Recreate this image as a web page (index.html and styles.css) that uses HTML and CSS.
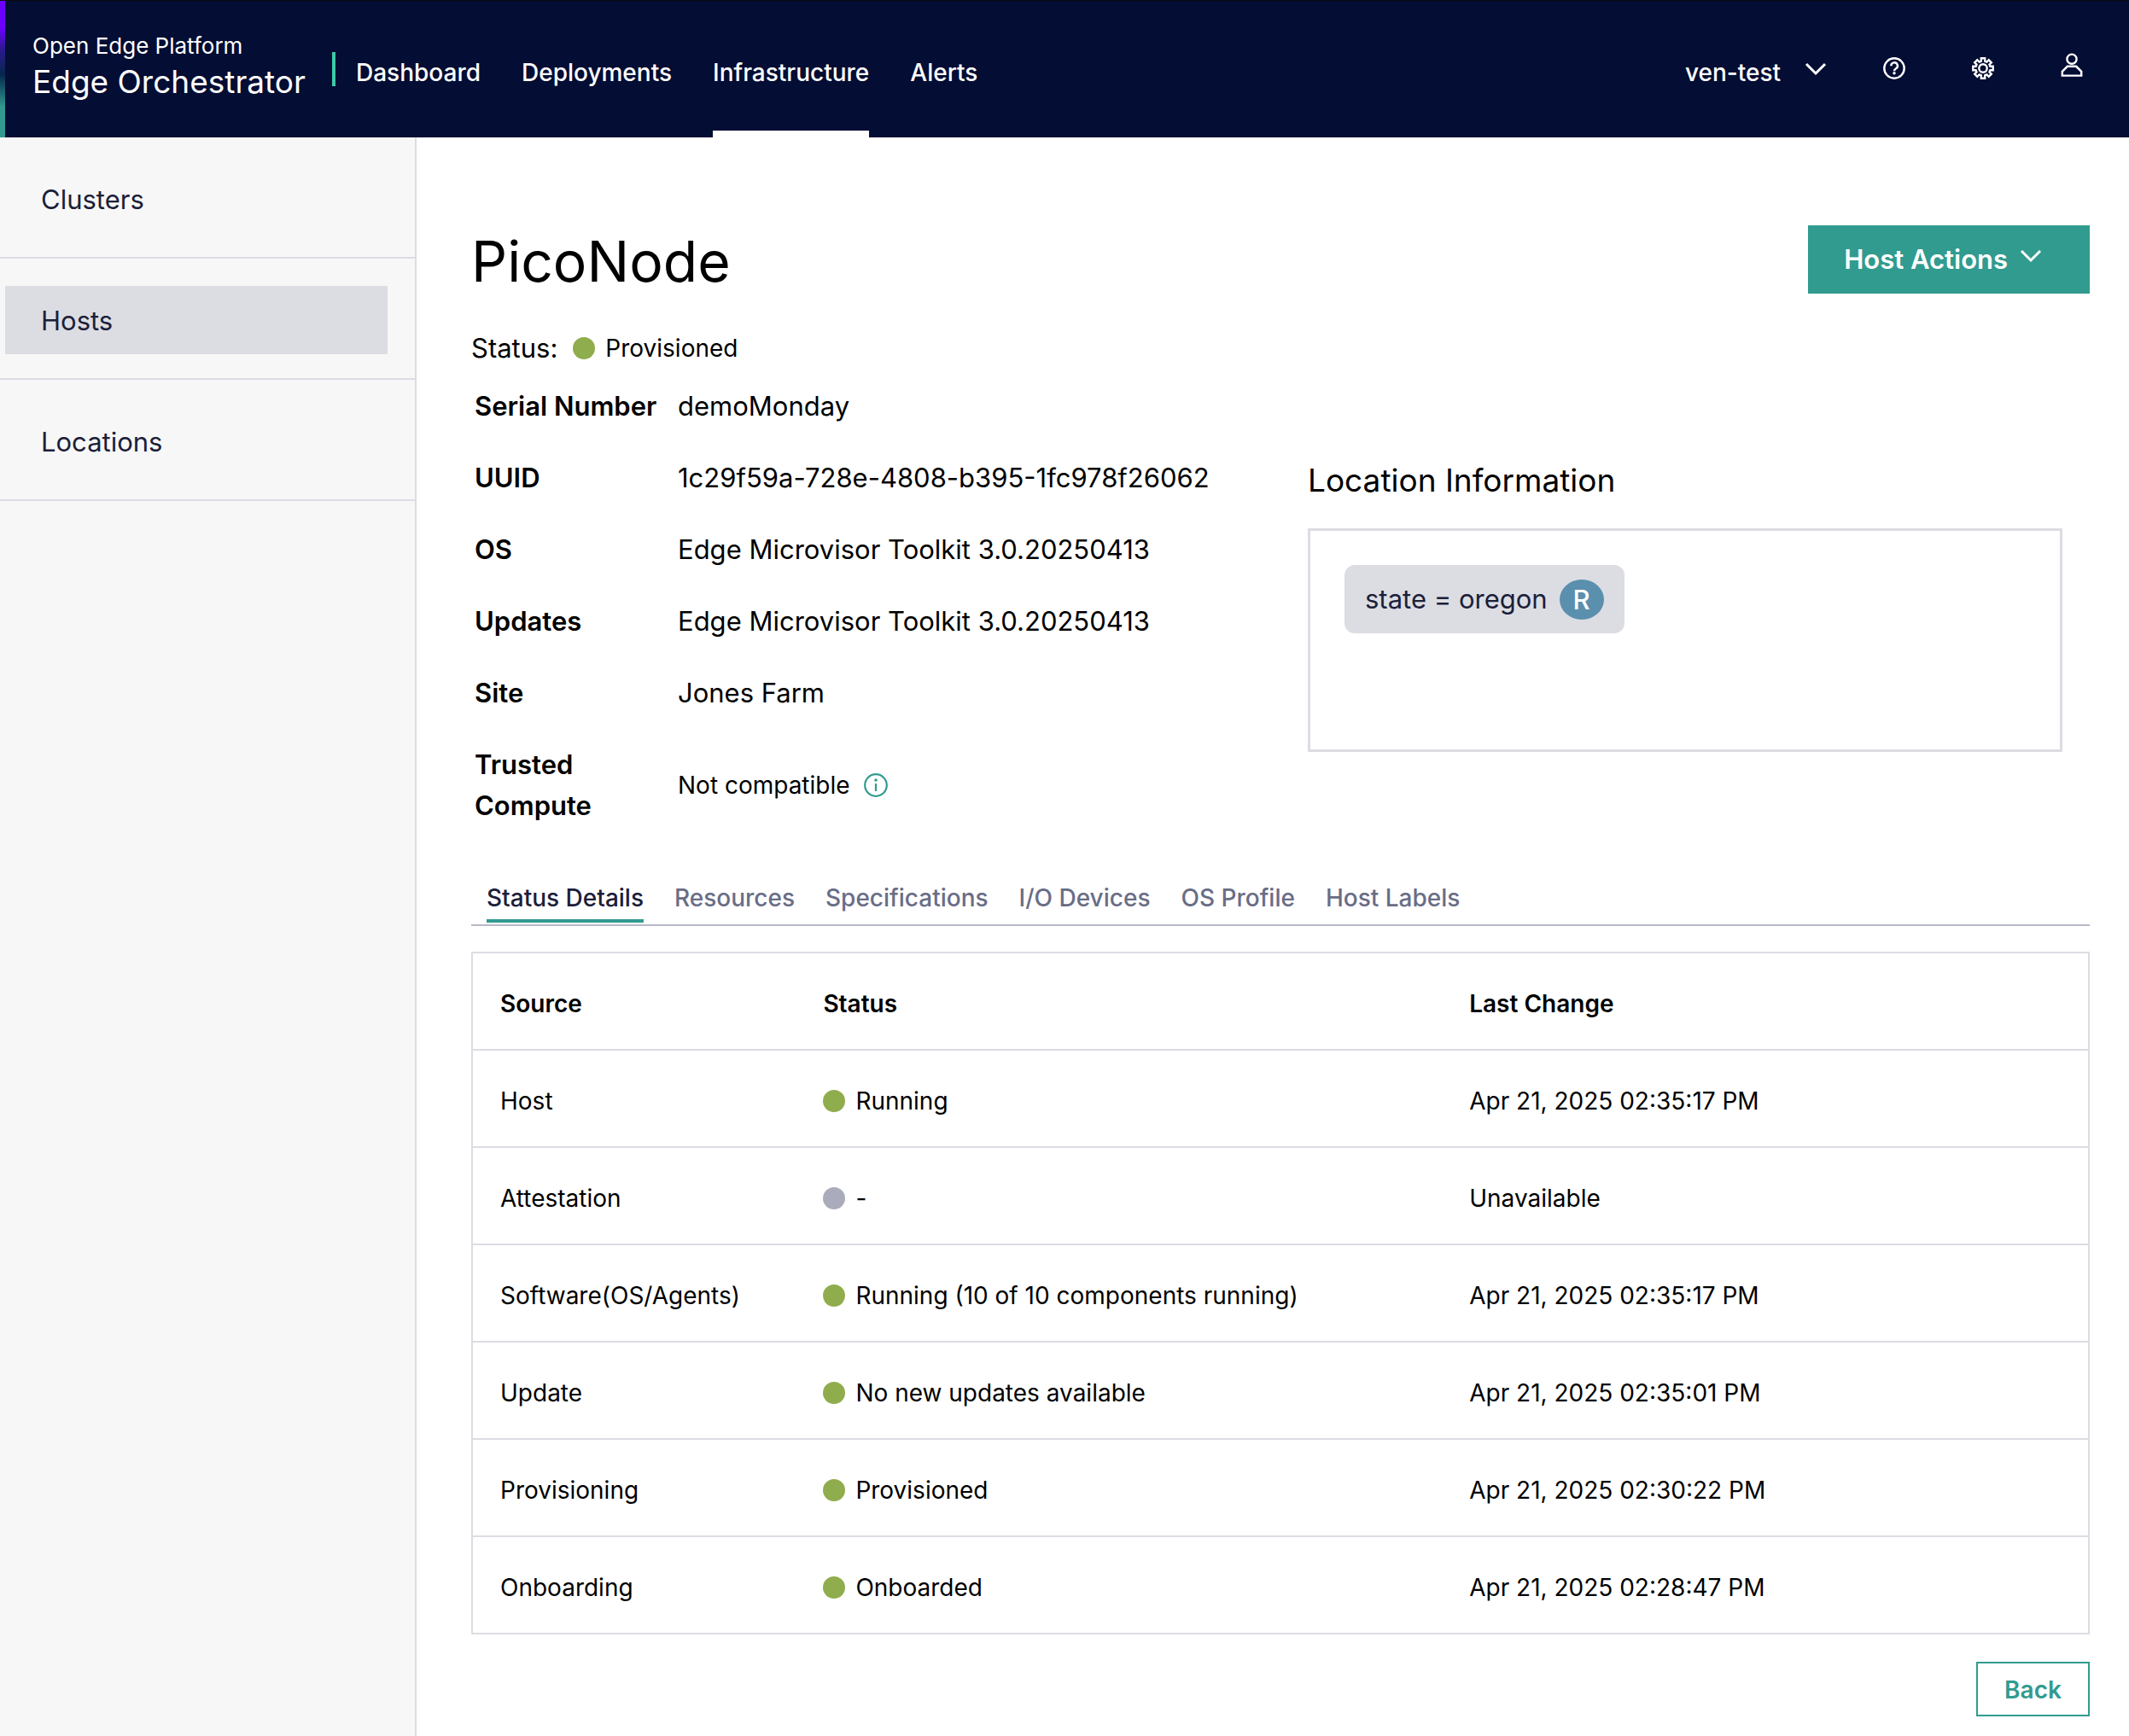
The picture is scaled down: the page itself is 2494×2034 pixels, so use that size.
FILE: index.html
```html
<!DOCTYPE html>
<html lang="en">
<head>
<meta charset="utf-8">
<meta name="viewport" content="width=device-width, initial-scale=1">
<title>PicoNode – Edge Orchestrator</title>
<link rel="stylesheet" href="styles.css">
</head>
<body>
<header class="topbar">
  <div class="brand">
    <span class="brand-platform">Open Edge Platform</span>
    <span class="brand-product">Edge Orchestrator</span>
  </div>
  <nav class="main-nav" aria-label="Main">
    <a class="nav-link" href="#">Dashboard</a>
    <a class="nav-link" href="#">Deployments</a>
    <a class="nav-link active" href="#" aria-current="page">Infrastructure</a>
    <a class="nav-link" href="#">Alerts</a>
  </nav>
  <div class="tools">
    <button class="project-switch" type="button">
      <span class="project-name">ven-test</span>
      <svg class="chevron" viewBox="0 0 26 16" aria-hidden="true"><path d="M2 2l11 11L24 2"/></svg>
    </button>
    <button class="icon-button" type="button" aria-label="Help">
      <svg class="icon" viewBox="0 0 26 26" aria-hidden="true"><circle cx="13" cy="13" r="11.7"/><path d="M9.3 10.2a3.8 3.8 0 1 1 5.800 3.100c-1.400.800-2.100 1.400-2.100 2.900"/><circle class="solid" cx="13" cy="18.700" r="1.700"/></svg>
    </button>
    <button class="icon-button" type="button" aria-label="Settings">
      <svg class="icon" viewBox="0 0 26 26" aria-hidden="true"><path d="M10.8 4.6V1.300h4.400v3.300L17.400 5.500l2.300-2.300 3.100 3.100-2.300 2.300.9 2.200h3.300v4.400h-3.300l-.9 2.200 2.300 2.300-3.100 3.100-2.300-2.300-2.200.9v3.300h-4.400v-3.300l-2.200-.9-2.300 2.300-3.100-3.100 2.300-2.300-.9-2.200H1.300v-4.400h3.300l.9-2.200-2.300-2.300 3.100-3.100 2.300 2.300z"/><circle cx="13" cy="13" r="4.700"/></svg>
    </button>
    <button class="icon-button account" type="button" aria-label="Account">
      <svg class="icon icon-tall" viewBox="0 0 26 28" aria-hidden="true"><circle cx="13" cy="7.200" r="5.600"/><path d="M1.800 26.600v-4.800l6-6h10.400l6 6v4.800z"/></svg>
    </button>
  </div>
</header>
<div class="layout">
  <nav class="sidebar" aria-label="Infrastructure">
    <ul class="side-list">
      <li class="side-item"><a class="side-link" href="#">Clusters</a></li>
      <li class="side-item"><a class="side-link active" href="#" aria-current="page">Hosts</a></li>
      <li class="side-item"><a class="side-link" href="#">Locations</a></li>
    </ul>
  </nav>
  <main class="content">
    <div class="title-row">
      <h1 class="title">PicoNode</h1>
      <button class="primary-button" type="button">Host Actions
        <svg class="chevron" viewBox="0 0 26 16" aria-hidden="true"><path d="M2 2l11 11L24 2"/></svg>
      </button>
    </div>
    <div class="host-status">
      <span class="host-status-label">Status:</span>
      <span class="status"><span class="dot ok"></span>Provisioned</span>
    </div>
    <div class="summary">
      <table class="facts">
        <tbody>
          <tr><th scope="row">Serial Number</th><td>demoMonday</td></tr>
          <tr><th scope="row">UUID</th><td>1c29f59a-728e-4808-b395-1fc978f26062</td></tr>
          <tr><th scope="row">OS</th><td>Edge Microvisor Toolkit 3.0.20250413</td></tr>
          <tr><th scope="row">Updates</th><td>Edge Microvisor Toolkit 3.0.20250413</td></tr>
          <tr><th scope="row">Site</th><td>Jones Farm</td></tr>
          <tr><th scope="row">Trusted Compute</th><td><span class="compat">Not compatible
            <svg class="info" viewBox="0 0 28 28" role="img" aria-label="More information"><circle cx="14" cy="14" r="12.800"/><path d="M14 12v9"/><circle class="solid" cx="14" cy="8" r="1.800"/></svg></span></td></tr>
        </tbody>
      </table>
      <section class="location">
        <h2 class="location-title">Location Information</h2>
        <div class="location-box">
          <span class="chip">state = oregon <span class="chip-badge">R</span></span>
        </div>
      </section>
    </div>
    <nav class="tabs" aria-label="Host details">
      <a class="tab active" href="#" aria-current="true">Status Details</a>
      <a class="tab" href="#">Resources</a>
      <a class="tab" href="#">Specifications</a>
      <a class="tab" href="#">I/O Devices</a>
      <a class="tab" href="#">OS Profile</a>
      <a class="tab" href="#">Host Labels</a>
    </nav>
    <table class="status-table">
      <thead>
        <tr><th class="col-source" scope="col">Source</th><th class="col-status" scope="col">Status</th><th class="col-change" scope="col">Last Change</th></tr>
      </thead>
      <tbody>
        <tr><td>Host</td><td><span class="status"><span class="dot ok"></span>Running</span></td><td>Apr 21, 2025 02:35:17 PM</td></tr>
        <tr><td>Attestation</td><td><span class="status"><span class="dot"></span>-</span></td><td>Unavailable</td></tr>
        <tr><td>Software(OS/Agents)</td><td><span class="status"><span class="dot ok"></span>Running (10 of 10 components running)</span></td><td>Apr 21, 2025 02:35:17 PM</td></tr>
        <tr><td>Update</td><td><span class="status"><span class="dot ok"></span>No new updates available</span></td><td>Apr 21, 2025 02:35:01 PM</td></tr>
        <tr><td>Provisioning</td><td><span class="status"><span class="dot ok"></span>Provisioned</span></td><td>Apr 21, 2025 02:30:22 PM</td></tr>
        <tr><td>Onboarding</td><td><span class="status"><span class="dot ok"></span>Onboarded</span></td><td>Apr 21, 2025 02:28:47 PM</td></tr>
      </tbody>
    </table>
    <div class="footer-actions">
      <button class="outline-button" type="button">Back</button>
    </div>
  </main>
</div>
</body>
</html>
```
FILE: styles.css
```css
:root {
  --navy: #040d33;
  --teal: #319b8f;
  --line: #dcdde3;
  --ink: #1b2039;
}

* { box-sizing: border-box; }

body {
  display: flex;
  flex-direction: column;
  min-height: 100vh;
  margin: 0;
  font: 400 28px/40px Inter, "Liberation Sans", sans-serif;
  color: #000;
  background: #fff;
}

a { color: inherit; text-decoration: none; }
button { font: inherit; color: inherit; background: none; border: 0; padding: 0; }
svg { display: block; flex: none; fill: none; stroke: currentColor; }
svg .solid { fill: currentColor; stroke: none; }

/* Top bar */
.topbar {
  display: flex;
  align-items: center;
  height: 161px;
  padding-right: 54px;
  border-top: 1px solid #0c0c0c;
  color: #fff;
  background:
    linear-gradient(#6c00ff 20%, #2a1a8c 36%, #06264d 54%, #319b8f 78%) left / 6px 100% no-repeat,
    var(--navy);
}
.brand {
  display: flex;
  flex-direction: column;
  align-self: flex-start;
  padding: 35px 31px 0 38px;
}
.brand-platform { font-size: 26px; line-height: 36px; }
.brand-product { font-size: 37px; line-height: 48px; }
.main-nav {
  display: flex;
  align-self: stretch;
  gap: 48px;
  align-items: stretch;
}
.main-nav::before {
  content: "";
  align-self: center;
  width: 4px;
  height: 40px;
  margin-right: -24px;
  background: #3fc9a9;
}
.nav-link {
  display: flex;
  align-items: center;
  padding-top: 16px;
  font-weight: 500;
  border-bottom: 8px solid transparent;
}
.nav-link.active { border-bottom-color: #fff; }
.tools {
  display: flex;
  align-items: center;
  gap: 78px;
  margin-left: auto;
}
.project-switch {
  display: flex;
  align-items: center;
  gap: 28px;
  margin-right: -12px;
  font-weight: 500;
}
.project-name { padding-top: 8px; }
.chevron { width: 26px; height: 16px; stroke-width: 3; }
.icon { width: 26px; height: 26px; stroke-width: 2.4; }
.icon-tall { height: 28px; }
.icon-button { padding-bottom: 2px; }
.account { padding-bottom: 10px; }

/* Page frame */
.layout { display: flex; flex: 1; }
.sidebar {
  flex: none;
  width: 488px;
  color: var(--ink);
  background: #f7f7f7;
  border-right: 2px solid var(--line);
}
.side-list { margin: 0; padding: 0; list-style: none; }
.side-item { padding: 32px 32px 28px 6px; border-bottom: 2px solid var(--line); }
.side-link { display: block; padding: 2px 42px 0; font-size: 31px; line-height: 78px; }
.side-link.active { background: var(--line); }
.content { flex: 1; min-width: 0; padding: 103px 46px 23px 64px; }

/* Title and status */
.title-row { display: flex; justify-content: space-between; align-items: flex-start; }
.title { margin: 0; font-size: 66px; font-weight: 400; line-height: 84px; }
.primary-button {
  display: flex;
  align-items: center;
  gap: 14px;
  height: 80px;
  padding: 0 56px 0 42px;
  font-size: 31px;
  font-weight: 600;
  color: #fff;
  background: var(--teal);
}
.primary-button .chevron { margin-bottom: 8px; }
.host-status { display: flex; align-items: center; gap: 18px; margin-top: 36px; line-height: 48px; }
.host-status-label { font-size: 31px; }
.status { display: inline-flex; align-items: center; gap: 12px; }
.dot { flex: none; width: 26px; height: 26px; border-radius: 50%; background: #aaacbb; }
.dot.ok { background: #8fad4c; }

/* Host facts and location */
.summary {
  display: grid;
  grid-template-columns: 1fr 1fr;
  align-items: center;
  margin-top: 1px;
}
.facts { border-spacing: 2px; font-size: 31px; line-height: 48px; text-align: left; }
.facts th { width: 238px; padding: 17px 20px 17px 2px; font-weight: 600; }
.facts td { padding: 17px 0; white-space: nowrap; }
.compat { display: flex; align-items: center; gap: 16px; font-size: 28px; }
.info { width: 28px; height: 28px; color: var(--teal); stroke-width: 2.2; }
.location { padding: 0 32px 4px; }
.location-title { margin: 0 0 28px; font-size: 37px; font-weight: 400; line-height: 56px; }
.location-box { min-height: 262px; padding: 40px; border: 3px solid var(--line); }
.chip {
  display: inline-flex;
  align-items: center;
  gap: 14px;
  height: 80px;
  padding: 0 24px;
  font-size: 31px;
  color: var(--ink);
  background: var(--line);
  border-radius: 12px;
}
.chip-badge {
  width: 52px;
  height: 47px;
  font-weight: 500;
  line-height: 47px;
  text-align: center;
  color: #fff;
  background: #5b8fae;
  border-radius: 50%;
}

/* Tabs */
.tabs {
  display: flex;
  gap: 36px;
  margin-top: 45px;
  padding: 0 18px 2px;
  font-weight: 500;
  color: #696d86;
  border-bottom: 2px solid #b6bac6;
}
.tab { padding-bottom: 5px; border-bottom: 4px solid transparent; }
.tab.active { color: var(--ink); border-bottom-color: var(--teal); }

/* Status table */
.status-table {
  width: 100%;
  margin-top: 30px;
  table-layout: fixed;
  border: 2px solid var(--line);
  border-spacing: 0;
  text-align: left;
}
.status-table th, .status-table td { padding: 39px 32px 33px; }
.status-table th { font-weight: 600; }
.status-table td { border-top: 2px solid var(--line); }
.status-table .status { display: flex; }
.col-source { width: 20%; }
.col-status { width: 40%; }
.col-change { width: 40%; }

.footer-actions { display: flex; justify-content: flex-end; margin-top: 32px; }
.outline-button {
  width: 133px;
  height: 64px;
  padding-top: 2px;
  font-weight: 600;
  color: var(--teal);
  border: 2px solid var(--teal);
}
```
